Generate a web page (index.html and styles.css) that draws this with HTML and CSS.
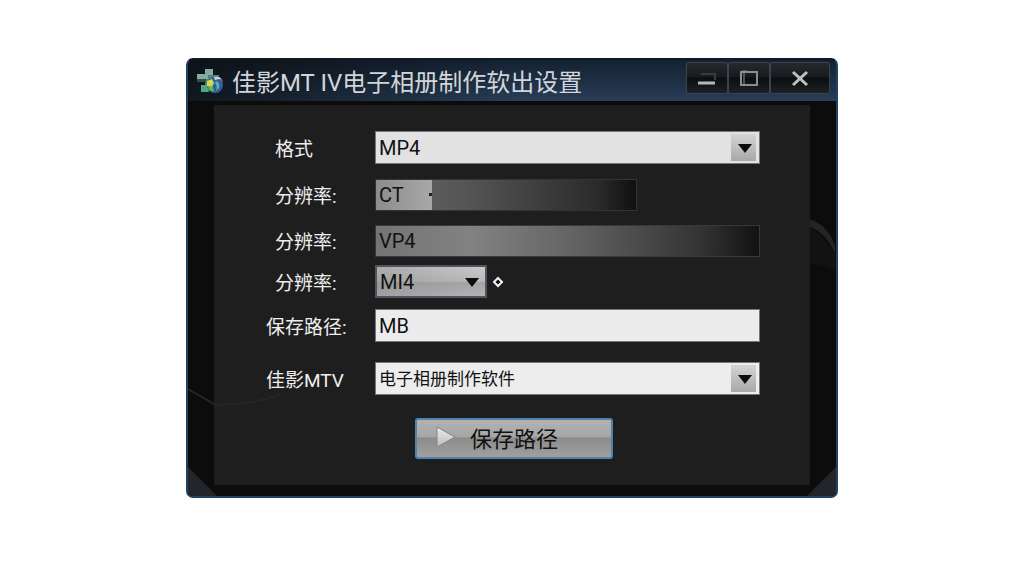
FILE: index.html
```
<!DOCTYPE html>
<html lang="zh-CN">

<head>
  <meta charset="UTF-8">
  <meta name="viewport" content="width=device-width, initial-scale=1.0">
  <title>佳影MT IV电子相册制作软出设置</title>
  <link rel="stylesheet" href="styles.css">
</head>

<body>
  <div class="window">
    <!-- 1.标题栏 -->
    <header class="titlebar">
      <svg class="logo" viewBox="0 0 28 28" aria-hidden="true">
        <path d="M9 1h8v6h6v7h-6v5h-4v5H5v-7h4v-3H1V6h8z" fill="#557f7c" />
        <path d="M9 1h8v6h-5v4H1V6h8z" fill="#86aa9f" />
        <path d="M1 11h9v3H1z" fill="#2c524a" />
        <path d="M5 17h7v7H5z" fill="#4fa77d" />
        <circle cx="19" cy="17" r="8" fill="#286399" />
        <path d="M11 13l5-2 2 4-2 4-5-1z" fill="#d5d84a" />
        <path d="M12 18l5 1 1 5-5-2z" fill="#62b957" />
        <path d="M18 9c4-1 7 0 8 3l-3-1-4 1z" fill="#d6cfd4" />
        <path d="M24 11l3 1-1 3z" fill="#9d4954" />
        <path d="M20 13c3 1 4 4 3 7l-3 3c1-3 1-6-1-8z" fill="#69a7bd" />
      </svg>
      <h1 class="title">佳影MT IV电子相册制作软出设置</h1>
      <div class="controls">
        <button class="control" type="button" aria-label="最小化">
          <svg viewBox="0 0 24 20">
            <path d="M6 6h14v6" fill="none" stroke="#383c3f" stroke-width="2" />
            <path d="M3 15h17" stroke="#b5b8ba" stroke-width="3" />
          </svg>
        </button>
        <button class="control" type="button" aria-label="最大化">
          <svg viewBox="0 0 24 20">
            <path d="M4 4h16v13H4z" fill="none" stroke="#8b8e90" stroke-width="2" />
            <path d="M7 4v12M5 3h5l2 2" fill="none" stroke="#8b8e90" />
          </svg>
        </button>
        <button class="control close" type="button" aria-label="关闭">
          <svg viewBox="0 0 24 20">
            <path d="M5 4l14 13M19 4L5 17" stroke="#bfc0c1" stroke-width="3" />
          </svg>
        </button>
      </div>
    </header>

    <!-- 2.设置 -->
    <div class="frame">
      <svg class="curve" viewBox="0 0 28 100" aria-hidden="true">
        <path d="M0 0c12 3 22 14 27 28v8C20 22 12 12 0 8z" fill="#242424" />
        <path d="M0 8c10 7 18 18 28 28v20C18 48 6 50 0 46z" fill="#121212" />
      </svg>
      <form class="panel">
        <svg class="wave" viewBox="0 0 110 30" aria-hidden="true">
          <path d="M0 0l28 16c25-1 45-3 65-11" fill="none" stroke="#252525" stroke-width="2" />
        </svg>
        <div class="row">
          <label for="format">格式</label>
          <span class="select">
            <select id="format">
              <option>MP4</option>
            </select>
          </span>
        </div>
        <div class="row">
          <label for="ratio1">分辨率:</label>
          <span class="split">
            <input id="ratio1" type="text" value="CT">
          </span>
        </div>
        <div class="row">
          <label for="ratio2">分辨率:</label>
          <input id="ratio2" class="fade" type="text" value="VP4">
        </div>
        <div class="row near">
          <label for="ratio3">分辨率:</label>
          <span class="select small">
            <select id="ratio3">
              <option>MI4</option>
            </select>
          </span>
          <svg class="diamond" viewBox="0 0 12 12" aria-hidden="true">
            <path d="M6 2l4 4-4 4-4-4z" fill="#111" stroke="#f4f4f4" stroke-width="2" />
          </svg>
        </div>
        <div class="row wide">
          <label for="path">保存路径:</label>
          <input id="path" type="text" value="MB">
        </div>
        <div class="row wide far">
          <label for="app">佳影MTV</label>
          <span class="select">
            <select id="app" class="name">
              <option>电子相册制作软件</option>
            </select>
          </span>
        </div>
        <button class="save" type="button">
          <svg viewBox="0 0 20 22" aria-hidden="true">
            <defs>
              <linearGradient id="play" x2="0" y2="1">
                <stop stop-color="#ededed" />
                <stop offset="1" stop-color="#bbb" />
              </linearGradient>
            </defs>
            <path d="M1 1l18 10L1 21z" fill="url(#play)" stroke="#858585" />
          </svg>
          保存路径
        </button>
      </form>
    </div>
  </div>
</body>

</html>
```

FILE: styles.css
```
* {
  box-sizing: border-box;
  margin: 0;
  padding: 0;
}

body {
  padding: 58px 24px 24px;
  background-color: #fefefe;
  font-family: Roboto, "Noto Sans CJK SC", sans-serif;
  font-size: 19px;
}

button,
input,
select {
  font: inherit;
}

.window {
  max-width: 652px;
  margin: 0 auto;
  border: 2px solid #234262;
  border-top-color: #101a22;
  border-radius: 7px;
  background-color: #0c0c0c;
  overflow: hidden;
}

/* 标题栏 */
.titlebar {
  display: flex;
  align-items: center;
  height: 42px;
  padding: 2px 6px 0 8px;
  border-bottom: 1px solid #100b0b;
  background: linear-gradient(to right, rgba(10, 14, 18, .8), rgba(10, 14, 18, 0) 50%), linear-gradient(#142131, #283d57);
}

.logo {
  width: 28px;
  height: 28px;
}

.title {
  flex: 1;
  margin-left: 8px;
  padding-top: 3px;
  color: #d2d5d9;
  font-size: 24px;
  font-weight: 400;
  line-height: 32px;
  white-space: nowrap;
}

.controls {
  display: flex;
  align-self: flex-start;
}

.control {
  display: flex;
  align-items: center;
  justify-content: center;
  width: 42px;
  height: 32px;
  border: 1px solid #3b444c;
  border-radius: 2px;
  background: linear-gradient(#25292d, #181b1e 45%, #0c0e10 50%, #1c2126);
}

.control svg {
  width: 24px;
  height: 20px;
}

.close {
  width: 60px;
}

/* 内容 */
.frame {
  position: relative;
  padding: 3px 26px 11px;
  background: linear-gradient(45deg, #22262a 20px, transparent 21px), linear-gradient(-45deg, #22262a 20px, transparent 21px), #0c0c0c;
}

.curve {
  position: absolute;
  top: 114px;
  right: 0;
  width: 26px;
  height: 100px;
}

.panel {
  position: relative;
  padding: 26px 50px 26px 61px;
  background-color: #1e1e1e;
}

.wave {
  position: absolute;
  left: -26px;
  bottom: 66px;
  width: 110px;
  height: 30px;
}

.row {
  position: relative;
  display: flex;
  align-items: center;
  height: 33px;
  margin-bottom: 13px;
}

.row.near {
  margin: -5px 0 11px;
}

.row.wide {
  margin-left: -9px;
}

.row.far {
  margin: 20px 0 23px -9px;
}

.row:first-of-type {
  margin-bottom: 14px;
}

.row label {
  flex: none;
  width: 100px;
  color: #eee;
}

.row.wide label {
  width: 109px;
}

input,
select {
  width: 100%;
  height: 33px;
  padding: 0 3px;
  border: 1px solid #77777b;
  border-radius: 0;
  outline: none;
  background-color: #ececec;
  color: #111;
  font-size: 20px;
}

select {
  appearance: none;
  background-color: #e2e2e2;
}

.name {
  background-color: #ededed;
  font-size: 17px;
}

.select {
  position: relative;
  flex: 1;
  display: flex;
}

/* 下拉箭头 */
.select::before {
  content: "";
  position: absolute;
  top: 3px;
  right: 4px;
  width: 25px;
  height: 27px;
  background: linear-gradient(#d4d4d4, #a8a8a8);
  pointer-events: none;
}

.select::after {
  content: "";
  position: absolute;
  top: 13px;
  right: 8px;
  border: 7px solid transparent;
  border-top: 9px solid #0c0c0c;
  border-bottom: 0;
  pointer-events: none;
}

.select.small {
  flex: none;
  width: 112px;
}

.small::before {
  display: none;
}

.small select {
  border: 2px solid #4b5660;
  background: linear-gradient(to right, rgba(140, 140, 140, .5), transparent), linear-gradient(#cacaca, #b8b8b8 50%, #a4a4a4 51%, #b4b4b4);
}

.diamond {
  width: 12px;
  height: 12px;
  margin-left: 5px;
}

.split {
  display: flex;
  width: 262px;
  border: 1px solid #343434;
  background: linear-gradient(to right, #5c5c5c 56px, #555 35%, #2b2b2b 85%, #101010);
}

.split input {
  width: 56px;
  height: 30px;
  border: 0;
  background: linear-gradient(to right, #8c8c8c, #a8a8a8);
}

.split::after {
  content: "";
  align-self: center;
  width: 3px;
  height: 3px;
  margin-left: -3px;
  background-color: #222;
}

.fade {
  height: 32px;
  border-color: #383838;
  background: linear-gradient(to right, #747474, #828282 25%, #656565 50%, #333 85%, #121212);
}

/* 保存按钮 */
.save {
  display: flex;
  align-items: center;
  gap: 14px;
  width: 198px;
  height: 41px;
  margin-left: 140px;
  padding: 0 19px 3px;
  border: 2px solid #4d83ae;
  border-radius: 3px;
  background: linear-gradient(#b2b2b2, #a6a6a6 46%, #8b8b8b 48%, #a0a0a0);
  color: #111;
  font-size: 22px;
}

.save svg {
  width: 20px;
  height: 22px;
}
```
